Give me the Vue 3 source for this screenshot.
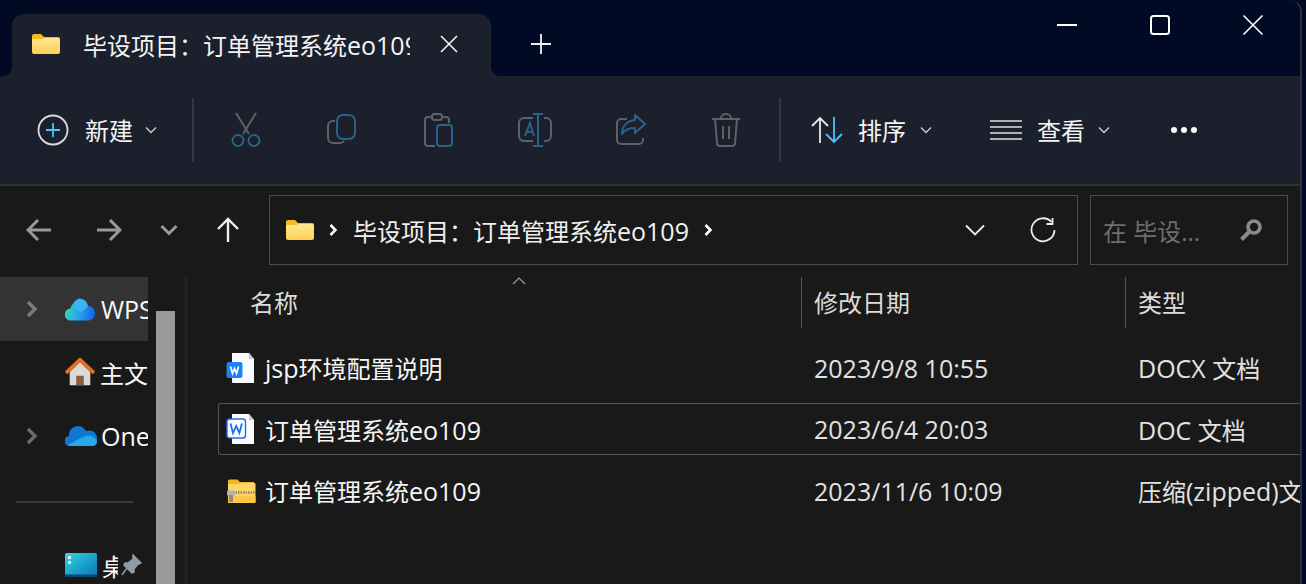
<template>
  <div class="window">
    <!-- 标题栏 -->
    <div class="titlebar">
      <div class="tab">
        <svg class="tab-folder" width="30" height="22" viewBox="0 0 30 22">
          <path d="M1 3a2 2 0 0 1 2-2h7l3 3h14a2 2 0 0 1 2 2v3H1z" fill="#f5b921" />
          <path d="M1 6h10l3-1h13a2 2 0 0 1 2 2v12a2 2 0 0 1-2 2H3a2 2 0 0 1-2-2z" fill="url(#folderFill)" />
          <defs>
            <linearGradient id="folderFill" x1="0" y1="0" x2="0" y2="1">
              <stop offset="0" stop-color="#ffe78f" />
              <stop offset="1" stop-color="#fdcf57" />
            </linearGradient>
          </defs>
        </svg>
        <span class="tab-title"><span v-for="p in parts(folderName)" :key="p" :class="{ lat: isLatin(p) }">{{ p }}</span></span>
        <svg class="tab-close" width="18" height="18" viewBox="0 0 18 18">
          <path d="M1 1l16 16M17 1L1 17" stroke="#f4f4f4" stroke-width="1.6" fill="none" />
        </svg>
      </div>
      <svg class="tab-add" width="22" height="22" viewBox="0 0 22 22">
        <path d="M11 1v20M1 11h20" stroke="#f0f0f0" stroke-width="1.8" fill="none" />
      </svg>
      <div class="win-controls">
        <svg width="22" height="22" viewBox="0 0 22 22"><path d="M1 11h20" stroke="#fff" stroke-width="2" /></svg>
        <svg width="22" height="22" viewBox="0 0 22 22"><rect x="2" y="2" width="18" height="18" rx="2.5" stroke="#fff" stroke-width="2" fill="none" /></svg>
        <svg width="22" height="22" viewBox="0 0 22 22"><path d="M1.5 1.5l19 19M20.5 1.5l-19 19" stroke="#fff" stroke-width="1.6" fill="none" /></svg>
      </div>
    </div>

    <!-- 工具栏 -->
    <div class="toolbar">
      <div class="tool-new">
        <svg width="32" height="32" viewBox="0 0 32 32">
          <circle cx="16" cy="16" r="14.5" stroke="#dcdcdc" stroke-width="1.8" fill="none" />
          <path d="M16 9v14M9 16h14" stroke="#4cc2ff" stroke-width="1.8" />
        </svg>
        <span class="tool-label">新建</span>
        <svg class="caret" width="12" height="8" viewBox="0 0 12 8"><path d="M1 1.5l5 5 5-5" stroke="#ccc" stroke-width="1.4" fill="none" /></svg>
      </div>
      <div class="tool-sep"></div>
      <div class="tool-icons">
        <svg width="32" height="36" viewBox="0 0 32 36">
          <path d="M6 1l13 21M26 1L13 22" stroke="#5f6168" stroke-width="2" fill="none" />
          <circle cx="8" cy="28.500" r="5.500" stroke="#2b6288" stroke-width="2" fill="none" />
          <circle cx="24" cy="28.500" r="5.500" stroke="#2b6288" stroke-width="2" fill="none" />
        </svg>
        <svg width="32" height="36" viewBox="0 0 32 36">
          <path d="M9 9H7a5 5 0 0 0-5 5v12a5 5 0 0 0 5 5h7a5 5 0 0 0 4-2" stroke="#5f6168" stroke-width="2" fill="none" />
          <rect x="11" y="3" width="18" height="24" rx="6" stroke="#2b6288" stroke-width="2" fill="none" />
        </svg>
        <svg width="32" height="36" viewBox="0 0 32 36">
          <path d="M10 5H6a3 3 0 0 0-3 3v23a3 3 0 0 0 3 3h7M20 5h4a3 3 0 0 1 3 3v3" stroke="#5f6168" stroke-width="2" fill="none" />
          <rect x="10" y="2" width="10" height="6" rx="2.500" stroke="#5f6168" stroke-width="2" fill="none" />
          <rect x="15" y="13" width="15" height="21" rx="3" stroke="#2b6288" stroke-width="2" fill="none" />
        </svg>
        <svg class="icon-rename" width="34" height="36" viewBox="0 0 34 36">
          <path d="M15 6H6a5 5 0 0 0-5 5v13a5 5 0 0 0 5 5h9M26 6h2a5 5 0 0 1 5 5v13a5 5 0 0 1-5 5h-2" stroke="#5f6168" stroke-width="2" fill="none" />
          <path d="M15 2h10M20 2v32M15 34h10M7 24l5-13 4 13M8.500 20h6" stroke="#2b6288" stroke-width="2" fill="none" />
        </svg>
        <svg width="32" height="36" viewBox="0 0 32 36">
          <path d="M12 7H6a4 4 0 0 0-4 4v17a4 4 0 0 0 4 4h18a4 4 0 0 0 4-4v-2" stroke="#5f6168" stroke-width="2" fill="none" />
          <path d="M20 3l10 9-10 9v-5c-6 0-10 1-13 6 0-8 5-13 13-14z" stroke="#2b6288" stroke-width="2" fill="none" stroke-linejoin="round" />
        </svg>
        <svg width="30" height="36" viewBox="0 0 30 36">
          <path d="M1 7h28M10 6a5 4 0 0 1 10 0M4 7l2 24a3 3 0 0 0 3 3h12a3 3 0 0 0 3-3l2-24M12 14v13M18 14v13" stroke="#5f6168" stroke-width="2" fill="none" />
        </svg>
      </div>
      <div class="tool-sep"></div>
      <div class="tool-sort">
        <svg width="34" height="28" viewBox="0 0 34 28">
          <path d="M10 27V2M2 10l8-8 8 8" stroke="#e8e8e8" stroke-width="1.8" fill="none" />
          <path d="M24 1v25M16 18l8 8 8-8" stroke="#4cc2ff" stroke-width="1.8" fill="none" />
        </svg>
        <span class="tool-label">排序</span>
        <svg class="caret" width="12" height="8" viewBox="0 0 12 8"><path d="M1 1.5l5 5 5-5" stroke="#ccc" stroke-width="1.4" fill="none" /></svg>
      </div>
      <div class="tool-view">
        <svg width="32" height="22" viewBox="0 0 32 22">
          <path d="M0 2h32M0 8h32M0 14h32M0 20h32" stroke="#e0e0e0" stroke-width="1.500" />
        </svg>
        <span class="tool-label">查看</span>
        <svg class="caret" width="12" height="8" viewBox="0 0 12 8"><path d="M1 1.5l5 5 5-5" stroke="#ccc" stroke-width="1.4" fill="none" /></svg>
      </div>
      <div class="tool-more">
        <i></i><i></i><i></i>
      </div>
    </div>

    <!-- 地址栏 -->
    <div class="navbar">
      <div class="nav-btns">
        <svg width="26" height="24" viewBox="0 0 26 24"><path d="M25 12H2.500M12 2L2 12l10 10" stroke="#9a9a9a" stroke-width="3" fill="none" /></svg>
        <svg class="nav-forward" width="26" height="24" viewBox="0 0 26 24"><path d="M1 12h22.500M14 2l10 10-10 10" stroke="#9a9a9a" stroke-width="3" fill="none" /></svg>
        <svg width="18" height="12" viewBox="0 0 18 12"><path d="M1.500 2L9 9.500 16.500 2" stroke="#9a9a9a" stroke-width="3" fill="none" /></svg>
        <svg width="24" height="26" viewBox="0 0 24 26"><path d="M12 25V2M2 12L12 2l10 10" stroke="#eee" stroke-width="2.400" fill="none" /></svg>
      </div>
      <div class="address">
        <svg width="30" height="22" viewBox="0 0 30 22">
          <path d="M1 3a2 2 0 0 1 2-2h7l3 3h14a2 2 0 0 1 2 2v3H1z" fill="#f5b921" />
          <path d="M1 6h10l3-1h13a2 2 0 0 1 2 2v12a2 2 0 0 1-2 2H3a2 2 0 0 1-2-2z" fill="url(#folderFill)" />
        </svg>
        <svg class="crumb" width="8" height="12" viewBox="0 0 8 12"><path d="M1.500 1l5 5-5 5" stroke="#fff" stroke-width="2.600" fill="none" /></svg>
        <span class="crumb-text"><span v-for="p in parts(folderName)" :key="p" :class="{ lat: isLatin(p) }">{{ p }}</span></span>
        <svg class="crumb" width="8" height="12" viewBox="0 0 8 12"><path d="M1.500 1l5 5-5 5" stroke="#fff" stroke-width="2.600" fill="none" /></svg>
        <svg class="addr-down" width="20" height="12" viewBox="0 0 20 12"><path d="M1 1.500l9 9 9-9" stroke="#eee" stroke-width="1.800" fill="none" /></svg>
        <svg class="addr-refresh" width="26" height="26" viewBox="0 0 26 26">
          <path d="M21.500 5A11.500 11.500 0 1 0 24.500 13" stroke="#eee" stroke-width="1.800" fill="none" />
          <path d="M22.500 1v6h-6" stroke="#eee" stroke-width="1.800" fill="none" />
        </svg>
      </div>
      <div class="search">
        <span class="search-text">在 毕设...</span>
        <svg width="24" height="24" viewBox="0 0 24 24">
          <circle cx="15" cy="9" r="6" stroke="#8a8a8a" stroke-width="3.600" fill="none" />
          <path d="M10.500 13.500L2.500 21.500" stroke="#8a8a8a" stroke-width="4" />
        </svg>
      </div>
    </div>

    <div class="main">
      <!-- 左侧导航 -->
      <div class="sidebar">
        <div class="side-row active">
          <svg class="side-arrow" width="12" height="18" viewBox="0 0 12 18"><path d="M2 2l7 7-7 7" stroke="#7b7b7b" stroke-width="3.400" fill="none" /></svg>
          <svg class="side-icon" width="31" height="23" viewBox="0 0 31 23">
            <defs>
              <linearGradient id="wpsCloud" x1="0" y1="0.600" x2="1" y2="0.700">
                <stop offset="0" stop-color="#2fd8b5" />
                <stop offset="0.450" stop-color="#2aa7ee" />
                <stop offset="1" stop-color="#0f62e0" />
              </linearGradient>
            </defs>
            <path d="M6 22.500a6 6 0 0 1-.5-12A9.500 9.500 0 0 1 23 8a7.300 7.300 0 0 1 1 14.500z" fill="url(#wpsCloud)" />
            <path d="M14 0.500a9 9 0 0 1 9 7.500l-7 7-8-7a9 9 0 0 1 6-7.500z" fill="#3ab4f5" />
          </svg>
          <span class="side-text lat">WPS</span>
        </div>
        <div class="side-row home">
          <svg class="side-icon" width="30" height="30" viewBox="0 0 32 30">
            <path d="M16 4L5 15v14h22V15z" fill="#d9d9d9" />
            <path d="M12 29V19h8v10z" fill="#8c5a3c" />
            <path d="M1 16L16 2l15 14" stroke="#e6701f" stroke-width="4" fill="none" />
          </svg>
          <span class="side-text">主文</span>
        </div>
        <div class="side-row onedrive">
          <svg class="side-arrow" width="12" height="18" viewBox="0 0 12 18"><path d="M2 2l7 7-7 7" stroke="#6b6b6b" stroke-width="3.400" fill="none" /></svg>
          <svg class="side-icon" width="32" height="22" viewBox="0 0 32 22">
            <path d="M5 21a5 5 0 0 1-1-10 9 9 0 0 1 17-5 7 7 0 0 1 6 15z" fill="#0f78d4" />
            <path d="M5 21a4.500 4.500 0 0 1-2-1l11-6 7-3c5-1 11 2 11 6 0 2-2 4-4 4z" fill="#28a8ea" />
          </svg>
          <span class="side-text lat">One</span>
        </div>
        <div class="side-divider"></div>
        <div class="side-row desktop">
          <svg class="side-icon" width="32" height="24" viewBox="0 0 32 24">
            <defs>
              <linearGradient id="deskFill" x1="0" y1="0" x2="1" y2="1">
                <stop offset="0" stop-color="#2fd6e0" />
                <stop offset="1" stop-color="#0b72b9" />
              </linearGradient>
            </defs>
            <rect width="32" height="24" rx="1.500" fill="url(#deskFill)" />
            <rect y="21.500" width="32" height="2.500" fill="#0b4a70" />
            <rect x="3" y="3" width="3" height="3" fill="#e6f8fb" />
            <rect x="3" y="8" width="3" height="3" fill="#e6f8fb" />
          </svg>
          <span class="side-text desk-text">桌</span>
          <svg class="pin" width="22" height="22" viewBox="0 0 22 22">
            <path d="M13 1l8 8-2 1-1 0-4 5 0 3-2 1-8-8 1-2 3 0 5-4 0-1zM7 14l-5 7" fill="#8f9ca6" stroke="#8f9ca6" stroke-width="1.500" />
          </svg>
        </div>
      </div>
      <div class="scroll-track"><div class="scroll-thumb"></div></div>
      <div class="splitter"></div>

      <!-- 文件列表 -->
      <div class="files">
        <div class="file-head">
          <svg class="sort-caret" width="14" height="8" viewBox="0 0 14 8"><path d="M1 7l6-6 6 6" stroke="#9a9a9a" stroke-width="1.200" fill="none" /></svg>
          <div class="col-name head-cell">名称</div>
          <div class="col-date head-cell">修改日期</div>
          <div class="col-type head-cell">类型</div>
        </div>
        <div v-for="file in files" :key="file.date" class="file-row" :class="{ selected: file.selected }">
          <div class="col-name name-cell">
            <svg v-if="file.kind === 'zip'" class="file-icon" width="30" height="24" viewBox="0 0 30 24">
              <path d="M2 2a1.500 1.500 0 0 1 1.500-1.500h8L14 3h14v5H2z" fill="#f3b51c" />
              <path d="M2 5h10l3-1h13.500a1 1 0 0 1 1 1v18a1 1 0 0 1-1 1H3a1 1 0 0 1-1-1z" fill="#fed568" />
              <path d="M2 17h27.500v6a1 1 0 0 1-1 1H3a1 1 0 0 1-1-1z" fill="#fbc746" />
              <path d="M7 13.500h22.500" stroke="#8c8670" stroke-width="2.500" stroke-dasharray="1.500 1" />
              <rect x="1" y="11.500" width="8" height="5" rx="1" fill="#b4b4b4" />
              <rect x="3" y="16" width="4" height="7" fill="#8d8d8d" />
            </svg>
            <svg v-else class="file-icon" width="30" height="32" viewBox="0 0 30 32">
              <path d="M6 1h17l5 6v24H7a1 1 0 0 1-1-1z" fill="#fafbfd" />
              <path d="M23 1l5 6h-5z" fill="#c5c9d2" />
              <template v-if="file.kind === 'solid'">
                <rect x="0.500" y="10" width="16" height="16" rx="2.500" fill="#1e82f5" />
                <path d="M4.500 14.500l2 7 2-5 2 5 2-7" stroke="#fff" stroke-width="1.700" fill="none" />
              </template>
              <template v-else>
                <rect x="1" y="6" width="18.500" height="19" rx="2.500" fill="#fafbfd" stroke="#1e6cf0" stroke-width="1.400" />
                <path d="M4.500 10.500l2.500 9.500 3.200-7 3.200 7 2.500-9.500" stroke="#1e6cf0" stroke-width="1.800" fill="none" />
              </template>
            </svg>
            <span><span v-for="p in parts(file.name)" :key="p" :class="{ lat: isLatin(p) }">{{ p }}</span></span>
          </div>
          <div class="col-date cell-dim lat">{{ file.date }}</div>
          <div class="col-type cell-dim"><span v-for="p in parts(file.type)" :key="p" :class="{ lat: isLatin(p) }">{{ p }}</span></div>
        </div>
      </div>
    </div>
  </div>
</template>

<script setup>
const folderName = '毕设项目：订单管理系统eo109'

const files = [
  { name: 'jsp环境配置说明', date: '2023/9/8 10:55', type: 'DOCX 文档', kind: 'solid' },
  { name: '订单管理系统eo109', date: '2023/6/4 20:03', type: 'DOC 文档', kind: 'outline', selected: true },
  { name: '订单管理系统eo109', date: '2023/11/6 10:09', type: '压缩(zipped)文件夹', kind: 'zip' }
]

// 西文比中文字号略大，分段渲染
function parts(text) {
  return text.match(/[\x00-\x7f]+|[^\x00-\x7f]+/g)
}

function isLatin(text) {
  return /^[\x00-\x7f]+$/.test(text)
}
</script>

<style>
html,
body {
  margin: 0;
  background: #000a24;
  overflow: hidden;
}
</style>

<style scoped>
.window {
  width: 1300px;
  height: 584px;
  overflow: hidden;
  background: #191919;
  color: #fff;
  font-family: "Open Sans", "Noto Sans CJK SC", sans-serif;
  font-size: 24px;
  border-right: 2px solid #2c303a;
  border-top-right-radius: 12px;
}

.lat {
  font-size: 25px;
}

svg {
  display: block;
  flex: none;
}

.titlebar {
  height: 76px;
  background: #000a24;
  display: flex;
  align-items: flex-end;
  padding-left: 12px;
}

.tab {
  position: relative;
  width: 479px;
  height: 62px;
  box-sizing: border-box;
  background: #1c202d;
  border-radius: 12px 12px 0 0;
  display: flex;
  align-items: center;
  padding: 0 0 2px 19px;
}

.tab::before,
.tab::after {
  content: "";
  position: absolute;
  bottom: 0;
  width: 10px;
  height: 10px;
}

.tab::before {
  left: -10px;
  background: radial-gradient(circle at 0 0, transparent 10px, #1c202d 10.500px);
}

.tab::after {
  right: -10px;
  background: radial-gradient(circle at 100% 0, transparent 10px, #1c202d 10.500px);
}

.tab-title {
  width: 327px;
  margin-left: 22px;
  overflow: hidden;
  white-space: nowrap;
  color: #f4f4f4;
}

.tab-close {
  margin-left: 30px;
}

.tab-add {
  margin: 0 0 21px 39px;
}

.win-controls {
  margin-left: auto;
  align-self: flex-start;
  display: flex;
  gap: 71px;
  padding: 14px 36px 0 0;
}

.toolbar {
  height: 108px;
  background: #1c202d;
  border-bottom: 2px solid #333;
  display: flex;
  align-items: center;
  padding-left: 37px;
}

.tool-label {
  color: #f4f4f4;
  line-height: 32px;
  padding-top: 2px;
}

.tool-new,
.tool-sort,
.tool-view {
  display: flex;
  align-items: center;
}

.tool-new .tool-label {
  margin-left: 16px;
}

.caret {
  margin-left: 12px;
}

.tool-sep {
  width: 2px;
  height: 64px;
  background: #34373f;
}

.tool-new + .tool-sep {
  margin-left: 35px;
}

.tool-icons {
  display: flex;
  align-items: center;
  width: 585px;
  box-sizing: border-box;
  padding-left: 36px;
  gap: 64px;
}

.icon-rename {
  margin-right: -1px;
}

.tool-sort {
  margin-left: 29px;
}

.tool-sort .tool-label {
  margin-left: 14px;
}

.tool-sort .caret {
  margin-left: 14px;
}

.tool-view {
  margin-left: 58px;
}

.tool-view .tool-label {
  margin-left: 15px;
}

.tool-view .caret {
  margin-left: 13px;
}

.tool-more {
  display: flex;
  gap: 4px;
  margin-left: 61px;
}

.tool-more i {
  width: 6px;
  height: 6px;
  border-radius: 50%;
  background: #fff;
}

.navbar {
  height: 91px;
  display: flex;
  align-items: center;
  padding: 0 0 3px 26px;
  box-sizing: border-box;
}

.nav-btns {
  width: 243px;
  display: flex;
  align-items: center;
  gap: 38px;
}

.nav-forward {
  margin-left: 6px;
}

.address {
  width: 809px;
  height: 70px;
  box-sizing: border-box;
  border: 1px solid #4b4b4b;
  display: flex;
  align-items: center;
  padding: 0 21px 0 15px;
}

.crumb {
  margin-left: 14px;
}

.crumb-text {
  margin-left: 16px;
  color: #f0f0f0;
}

.crumb-text + .crumb {
  margin-left: 15px;
}

.addr-down {
  margin-left: auto;
}

.addr-refresh {
  margin-left: 45px;
}

.search {
  width: 198px;
  height: 70px;
  box-sizing: border-box;
  margin-left: 12px;
  border: 1px solid #4b4b4b;
  display: flex;
  align-items: center;
  justify-content: space-between;
  padding: 0 24px 0 12px;
}

.search-text {
  color: #6e6e6e;
  white-space: nowrap;
}

.main {
  height: 307px;
  display: flex;
}

.sidebar {
  width: 148px;
  flex: none;
  overflow: hidden;
}

.side-row {
  height: 64px;
  display: flex;
  align-items: center;
  position: relative;
  padding-left: 65px;
  white-space: nowrap;
}

.side-row.active {
  background: #333;
}

.side-arrow {
  position: absolute;
  left: 26px;
  top: 50%;
  margin-top: -9px;
}

.side-icon {
  margin-right: 5px;
}

.side-text {
  color: #f8f8f8;
}

.side-row.home {
  height: 62px;
}

.side-row.home .side-icon {
  margin-right: 5px;
}

.side-row.onedrive {
  height: 66px;
}

.side-row.onedrive .side-icon {
  margin-right: 4px;
}

.side-divider {
  height: 2px;
  background: #383838;
  margin: 32px 15px 0 16px;
}

.side-row.desktop {
  height: 60px;
  margin-top: 32px;
}

.desk-text {
  width: 16px;
  flex: none;
  overflow: hidden;
}

.pin {
  margin-left: 2px;
}

.scroll-track {
  width: 36px;
  flex: none;
  padding-left: 8px;
  box-sizing: border-box;
}

.scroll-thumb {
  width: 19px;
  height: 100%;
  margin-top: 34px;
  background: #999;
}

.splitter {
  width: 4px;
  flex: none;
  background: #212121;
}

.files {
  flex: 1;
  min-width: 0;
  overflow: hidden;
  padding-left: 30px;
}

.file-head,
.file-row {
  display: grid;
  grid-template-columns: 583px 324px 1fr;
  align-items: center;
  white-space: nowrap;
}

.file-head {
  position: relative;
  height: 51px;
  margin-bottom: 13.5px;
}

.sort-caret {
  position: absolute;
  left: 294px;
  top: 0;
}

.head-cell {
  height: 51px;
  line-height: 51px;
  color: #dcdcdc;
  box-sizing: border-box;
}

.file-head .col-name {
  padding-left: 32px;
}

.file-head .col-date,
.file-head .col-type {
  border-left: 1px solid #555;
  padding-left: 12px;
}

.file-row {
  height: 52px;
  margin-bottom: 9.5px;
  box-sizing: border-box;
  border: 1px solid transparent;
  border-right: 0;
  border-radius: 3px 0 0 3px;
}

.file-row .col-date,
.file-row .col-type {
  padding-left: 12px;
}

.file-row.selected {
  border-color: #555;
}

.name-cell {
  display: flex;
  align-items: center;
  padding-left: 7px;
  color: #f6f6f6;
}

.file-icon {
  margin-right: 9px;
}

.cell-dim {
  color: #e2e2e2;
  overflow: hidden;
}
</style>
